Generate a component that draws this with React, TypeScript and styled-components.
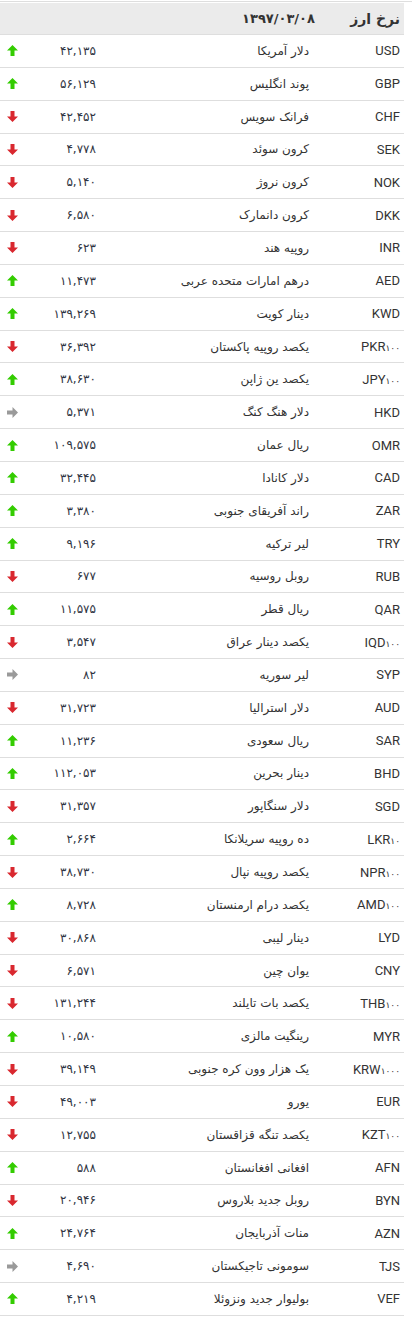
import React from 'react';
import styled, {createGlobalStyle} from 'styled-components';

const GlobalStyle = createGlobalStyle`
    html, body {
        margin: 0;
        padding: 0;
        background: #fff;
    }
    body {
        font-family: Roboto, "DejaVu Sans", sans-serif;
        color: #333;
    }
`;

type Trend = 'up' | 'down' | 'same';

type Rate = {
    code: string;
    unit?: string;
    name: string;
    value: string;
    trend: Trend;
};

const rates: Rate[] = [
    {code: 'USD', name: 'دلار آمریکا', value: '۴۲,۱۳۵', trend: 'up'},
    {code: 'GBP', name: 'پوند انگلیس', value: '۵۶,۱۲۹', trend: 'up'},
    {code: 'CHF', name: 'فرانک سویس', value: '۴۲,۴۵۲', trend: 'down'},
    {code: 'SEK', name: 'کرون سوئد', value: '۴,۷۷۸', trend: 'down'},
    {code: 'NOK', name: 'کرون نروژ', value: '۵,۱۴۰', trend: 'down'},
    {code: 'DKK', name: 'کرون دانمارک', value: '۶,۵۸۰', trend: 'down'},
    {code: 'INR', name: 'روپیه هند', value: '۶۲۳', trend: 'down'},
    {code: 'AED', name: 'درهم امارات متحده عربی', value: '۱۱,۴۷۳', trend: 'up'},
    {code: 'KWD', name: 'دینار کویت', value: '۱۳۹,۲۶۹', trend: 'up'},
    {code: 'PKR', unit: '۱۰۰', name: 'یکصد روپیه پاکستان', value: '۳۶,۳۹۲', trend: 'down'},
    {code: 'JPY', unit: '۱۰۰', name: 'یکصد ین ژاپن', value: '۳۸,۶۳۰', trend: 'up'},
    {code: 'HKD', name: 'دلار هنگ کنگ', value: '۵,۳۷۱', trend: 'same'},
    {code: 'OMR', name: 'ریال عمان', value: '۱۰۹,۵۷۵', trend: 'up'},
    {code: 'CAD', name: 'دلار کانادا', value: '۳۲,۴۴۵', trend: 'up'},
    {code: 'ZAR', name: 'راند آفریقای جنوبی', value: '۳,۳۸۰', trend: 'up'},
    {code: 'TRY', name: 'لیر ترکیه', value: '۹,۱۹۶', trend: 'up'},
    {code: 'RUB', name: 'روبل روسیه', value: '۶۷۷', trend: 'down'},
    {code: 'QAR', name: 'ریال قطر', value: '۱۱,۵۷۵', trend: 'up'},
    {code: 'IQD', unit: '۱۰۰', name: 'یکصد دینار عراق', value: '۳,۵۴۷', trend: 'down'},
    {code: 'SYP', name: 'لیر سوریه', value: '۸۲', trend: 'same'},
    {code: 'AUD', name: 'دلار استرالیا', value: '۳۱,۷۲۳', trend: 'down'},
    {code: 'SAR', name: 'ریال سعودی', value: '۱۱,۲۳۶', trend: 'up'},
    {code: 'BHD', name: 'دینار بحرین', value: '۱۱۲,۰۵۳', trend: 'up'},
    {code: 'SGD', name: 'دلار سنگاپور', value: '۳۱,۳۵۷', trend: 'down'},
    {code: 'LKR', unit: '۱۰', name: 'ده روپیه سریلانکا', value: '۲,۶۶۴', trend: 'up'},
    {code: 'NPR', unit: '۱۰۰', name: 'یکصد روپیه نپال', value: '۳۸,۷۳۰', trend: 'down'},
    {code: 'AMD', unit: '۱۰۰', name: 'یکصد درام ارمنستان', value: '۸,۷۲۸', trend: 'up'},
    {code: 'LYD', name: 'دینار لیبی', value: '۳۰,۸۶۸', trend: 'down'},
    {code: 'CNY', name: 'یوان چین', value: '۶,۵۷۱', trend: 'down'},
    {code: 'THB', unit: '۱۰۰', name: 'یکصد بات تایلند', value: '۱۳۱,۲۴۴', trend: 'down'},
    {code: 'MYR', name: 'رینگیت مالزی', value: '۱۰,۵۸۰', trend: 'up'},
    {code: 'KRW', unit: '۱۰۰۰', name: 'یک هزار وون کره جنوبی', value: '۳۹,۱۴۹', trend: 'down'},
    {code: 'EUR', name: 'یورو', value: '۴۹,۰۰۳', trend: 'down'},
    {code: 'KZT', unit: '۱۰۰', name: 'یکصد تنگه قزاقستان', value: '۱۲,۷۵۵', trend: 'down'},
    {code: 'AFN', name: 'افغانی افغانستان', value: '۵۸۸', trend: 'up'},
    {code: 'BYN', name: 'روبل جدید بلاروس', value: '۲۰,۹۴۶', trend: 'down'},
    {code: 'AZN', name: 'منات آذربایجان', value: '۲۴,۷۶۴', trend: 'up'},
    {code: 'TJS', name: 'سومونی تاجیکستان', value: '۴,۶۹۰', trend: 'same'},
    {code: 'VEF', name: 'بولیوار جدید ونزوئلا', value: '۴,۲۱۹', trend: 'up'},
];

const trendColors: Record<Trend, string> = {
    up: '#33cc00',
    down: '#d9282f',
    same: '#9a9a9a',
};

const Page = styled.div`
    padding-top: 1px;
`;

const TopRule = styled.div`
    height: 1px;
    background: #dedede;
    margin-bottom: 1px;
`;

const Table = styled.div`
    width: 404px;
    direction: rtl;
`;

const HeaderRow = styled.div`
    display: grid;
    grid-template-columns: 89px 1fr;
    height: 32px;
    align-items: center;
    background: #ebebeb;
    border-bottom: 1px solid #dedede;
    box-sizing: border-box;
`;

const HeaderCell = styled.div<{$size: number; $pad: number}>`
    padding-right: ${(p) => p.$pad}px;
    font-family: "DejaVu Sans", sans-serif;
    font-weight: bold;
    font-size: ${(p) => p.$size}px;
    color: #333;
    white-space: nowrap;
`;

const Row = styled.div`
    display: grid;
    grid-template-columns: 90px 1fr 71px 30px;
    height: 32.85px;
    align-items: center;
    border-bottom: 1px solid #dedede;
    box-sizing: border-box;
`;

const Code = styled.div`
    direction: ltr;
    text-align: right;
    padding-right: 4px;
    font-family: Roboto, sans-serif;
    font-size: 13px;
    color: #333;
`;

const Unit = styled.span`
    font-family: "DejaVu Sans", sans-serif;
    font-size: 9px;
`;

const Name = styled.div`
    padding-right: 5px;
    font-family: "DejaVu Sans", sans-serif;
    font-size: 12px;
    color: #333;
    white-space: nowrap;
`;

const Value = styled.div`
    padding-right: 5px;
    font-family: "DejaVu Sans", sans-serif;
    font-size: 12px;
    color: #2f3442;
    white-space: nowrap;
`;

const ArrowCell = styled.div`
    display: flex;
    justify-content: flex-end;
    padding-left: 7px;
`;

const Svg = styled.svg`
    display: block;
`;

function TrendArrow({trend}: {trend: Trend}): JSX.Element {
    const color = trendColors[trend];
    const rotate = trend === 'up' ? 0 : trend === 'down' ? 180 : 90;
    return (
        <Svg width="11" height="11" viewBox="0 0 11 11" style={{transform: `rotate(${rotate}deg)`}}>
            <path d="M5.5 0 L11 5.5 H7.5 V11 H3.5 V5.5 H0 Z" fill={color} />
        </Svg>
    );
}

export default function App(): JSX.Element {
    return (
        <>
            <GlobalStyle />
            <Page>
                <TopRule />
                <Table>
                    <HeaderRow>
                        <HeaderCell $size={14} $pad={4}>نرخ ارز</HeaderCell>
                        <HeaderCell $size={13} $pad={0}>۱۳۹۷/۰۳/۰۸</HeaderCell>
                    </HeaderRow>
                    {rates.map((r) => (
                        <Row key={r.code}>
                            <Code>
                                {r.code}
                                {r.unit && <Unit>{r.unit}</Unit>}
                            </Code>
                            <Name>{r.name}</Name>
                            <Value>{r.value}</Value>
                            <ArrowCell>
                                <TrendArrow trend={r.trend} />
                            </ArrowCell>
                        </Row>
                    ))}
                </Table>
            </Page>
        </>
    );
}
